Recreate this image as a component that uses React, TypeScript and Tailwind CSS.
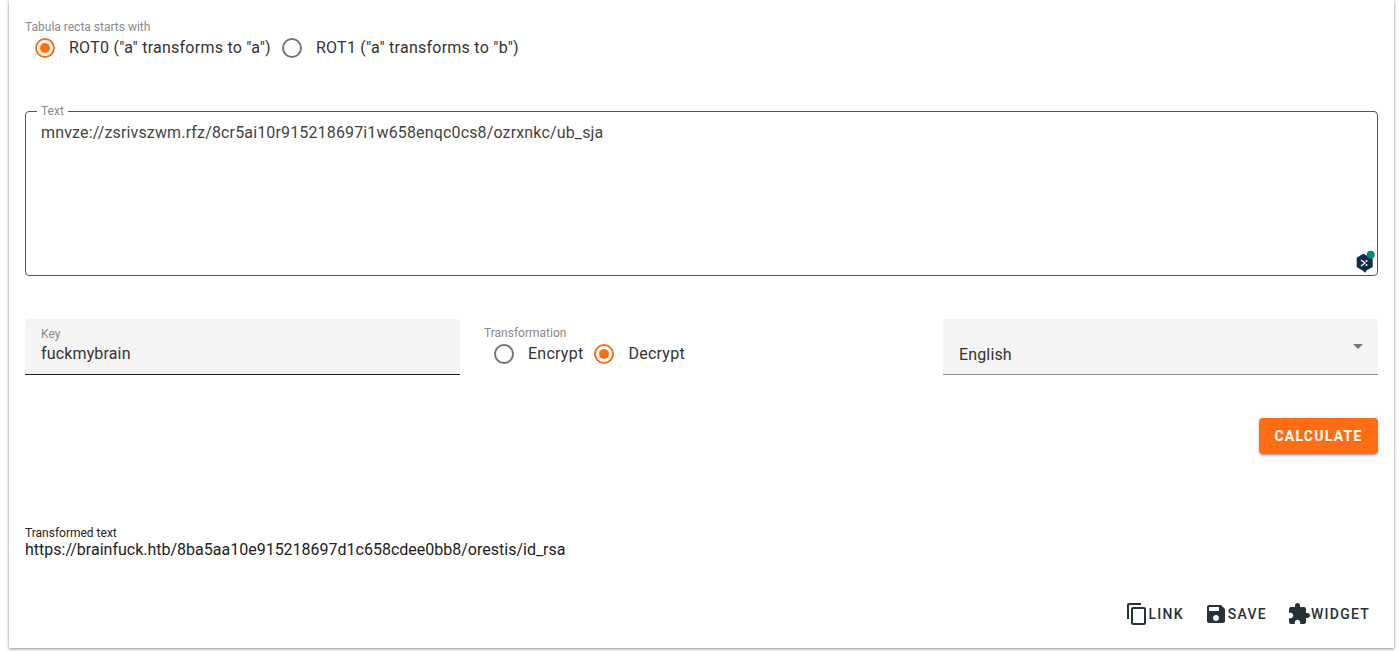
import { useState } from "react";

const font = "font-['Roboto',_'Liberation_Sans',_sans-serif]";

function Radio({ label, checked, onChange }: { label: string; checked: boolean; onChange: () => void }) {
  return (
    <label className="flex items-center cursor-pointer" onClick={onChange}>
      <span className="flex h-[42px] w-[42px] shrink-0 items-center justify-center">
        <span
          className={`flex h-5 w-5 items-center justify-center rounded-full border-2 ${checked ? "border-[#ff6d12]" : "border-[#757575]"}`}
        >
          {checked && <span className="h-2.5 w-2.5 rounded-full bg-[#ff6d12]" />}
        </span>
      </span>
      <span className="ml-[3px] text-base leading-6 text-[#333333] tracking-[0.25px] whitespace-nowrap">{label}</span>
    </label>
  );
}

function ActionButton({ label, path }: { label: string; path: string }) {
  return (
    <button className="flex h-9 items-center px-2 text-sm font-medium uppercase tracking-[1.25px] text-[#263238]">
      <svg viewBox="0 0 24 24" className="h-6 w-6 fill-current">
        <path d={path} />
      </svg>
      <span>{label}</span>
    </button>
  );
}

export default function App() {
  const [tabula, setTabula] = useState("rot0");
  const [mode, setMode] = useState("decrypt");

  return (
    <div className={`${font} h-[651px] overflow-hidden bg-white`}>
      <div className="mx-[9px] flex h-[648px] w-[1385px] flex-col bg-white px-4 shadow-[0_1px_3px_rgba(0,0,0,0.45)]">
        <div className="pt-[21px] text-xs leading-3 text-[#8a8a8a]">Tabula recta starts with</div>
        <div className="flex h-[42px] -ml-px -mt-[6px]">
          <Radio label={'ROT0 ("a" transforms to "a")'} checked={tabula === "rot0"} onChange={() => setTabula("rot0")} />
          <Radio label={'ROT1 ("a" transforms to "b")'} checked={tabula === "rot1"} onChange={() => setTabula("rot1")} />
        </div>

        <div className="relative mt-[36px] h-[172px]">
          <fieldset className="absolute inset-x-0 top-0 bottom-[1px] rounded border border-[#555555] px-[11px]">
            <legend className="px-1 text-xs leading-3 text-[#8a8a8a]">Text</legend>
          </fieldset>
          <textarea
            defaultValue="mnvze://zsrivszwm.rfz/8cr5ai10r915218697i1w658enqc0cs8/ozrxnkc/ub_sja"
            className="absolute inset-x-px top-[16px] bottom-[2px] px-[15px] py-0 text-base leading-6 tracking-[0.15px] text-[#444444] outline-none resize-none"
          />
          <svg viewBox="0 0 24 26" className="absolute bottom-[1px] right-[2px] h-[26px] w-6">
            <path d="M4.7 7.7 L11.3 3.7 L20.7 8.7 L20.7 17 L14.7 20.3 L13.5 22.7 L10 20.3 L4.7 17 Z" fill="#12294a" />
            <path d="M9 10 L13 13 L9 16" stroke="#ffffff" strokeWidth="1.3" fill="none" />
            <circle cx="14.5" cy="11" r="1" fill="#ffffff" />
            <circle cx="14.5" cy="15" r="1" fill="#ffffff" />
            <circle cx="18.7" cy="4.7" r="4" fill="#00897b" />
          </svg>
        </div>

        <div className="mt-[42px] grid grid-cols-3 gap-x-[24px]">
          <div className="h-14 rounded-t bg-[#f4f4f4] border-b border-[#1f1f1f] px-4 pt-2">
            <div className="text-xs leading-[15px] text-[#8a8a8a]">Key</div>
            <input
              defaultValue="fuckmybrain"
              className="w-full bg-transparent text-base leading-6 tracking-[0.15px] text-[#333333] outline-none"
            />
          </div>
          <div>
            <div className="pt-[7px] text-xs leading-[14px] text-[#8a8a8a]">Transformation</div>
            <div className="flex -mt-[7px] -ml-px">
              <Radio label="Encrypt" checked={mode === "encrypt"} onChange={() => setMode("encrypt")} />
              <Radio label="Decrypt" checked={mode === "decrypt"} onChange={() => setMode("decrypt")} />
            </div>
          </div>
          <div className="flex h-14 items-center justify-between rounded-t border-b border-[#8c8c8c] bg-[#f4f4f4] pl-4 pr-[15px]">
            <span className="pt-[17px] text-base leading-6 tracking-[0.15px] text-[#333333]">English</span>
            <span className="h-0 w-0 border-x-[5px] border-t-[5px] border-x-transparent border-t-[#757575]" />
          </div>
        </div>

        <div className="mt-[43px] flex justify-end">
          <button className="h-9 w-[119px] rounded bg-[#ff6d12] text-sm font-bold uppercase tracking-[1.25px] text-white shadow-[0_3px_1px_-2px_rgba(0,0,0,0.2),0_2px_2px_0_rgba(0,0,0,0.14),0_1px_5px_0_rgba(0,0,0,0.12)]">
            Calculate
          </button>
        </div>

        <div className="mt-[72px] text-xs leading-[14px] text-[#222222]">Transformed text</div>
        <div className="text-base leading-[19px] text-[#222222]">
          https://brainfuck.htb/8ba5aa10e915218697d1c658cdee0bb8/orestis/id_rsa
        </div>

        <div className="mt-[37px] flex justify-end gap-1">
          <ActionButton
            label="Link"
            path="M16 1H4c-1.1 0-2 .9-2 2v14h2V3h12V1zm3 4H8c-1.1 0-2 .9-2 2v14c0 1.1.9 2 2 2h11c1.1 0 2-.9 2-2V7c0-1.1-.9-2-2-2zm0 16H8V7h11v14z"
          />
          <ActionButton
            label="Save"
            path="M17 3H5c-1.11 0-2 .9-2 2v14c0 1.1.89 2 2 2h14c1.1 0 2-.9 2-2V7l-4-4zm-5 16c-1.66 0-3-1.34-3-3s1.34-3 3-3 3 1.34 3 3-1.34 3-3 3zm3-10H5V5h10v4z"
          />
          <ActionButton
            label="Widget"
            path="M20.5 11H19V7c0-1.1-.9-2-2-2h-4V3.5C13 2.12 11.88 1 10.5 1S8 2.12 8 3.5V5H4c-1.1 0-1.99.9-1.99 2v3.8H3.5c1.49 0 2.7 1.21 2.7 2.7s-1.21 2.7-2.7 2.7H2V20c0 1.1.9 2 2 2h3.8v-1.5c0-1.49 1.21-2.7 2.7-2.7 1.49 0 2.7 1.21 2.7 2.7V22H17c1.1 0 2-.9 2-2v-4h1.5c1.38 0 2.5-1.12 2.5-2.5S21.88 11 20.5 11z"
          />
        </div>
      </div>
    </div>
  );
}
